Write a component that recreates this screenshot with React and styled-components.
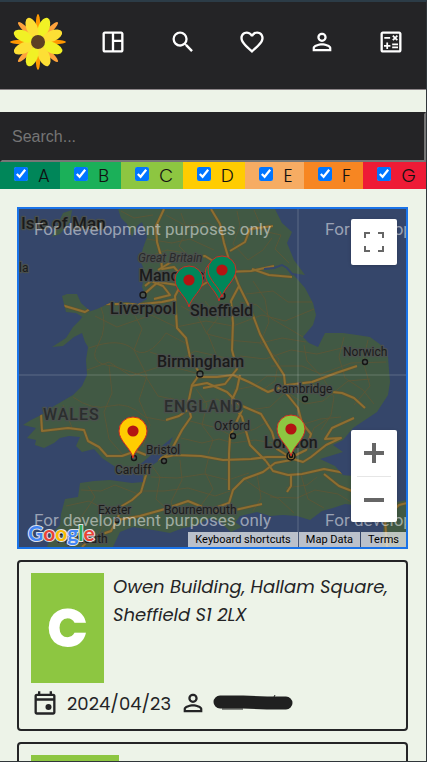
import React from "react";
import styled, { createGlobalStyle } from "styled-components";
import {
  MdOutlineSpaceDashboard,
  MdSearch,
  MdFavoriteBorder,
  MdPersonOutline,
  MdOutlineCalculate,
} from "react-icons/md";

const GlobalStyle = createGlobalStyle`
  *, *::before, *::after { box-sizing: border-box; }
  body {
    margin: 0;
    background: #edf3e8;
    color: #242426;
    font-family: Poppins, Inter, sans-serif;
    font-size: 18px;
    font-weight: 300;
  }
`;

const Shell = styled.div`
  height: 100vh;
  overflow-x: hidden;
  overflow-y: auto;
  scrollbar-width: none;
  border: solid #30363a;
  border-width: 0 1px 1px 0;
  border-top: 2px solid #2c3c47;
`;

const Header = styled.header`
  display: flex;
  align-items: center;
  gap: 31px;
  height: 88px;
  padding: 0 21px 8px 10px;
  background: #242426;
  border-bottom: 1px solid #8c8588;
`;

const HomeLink = styled.a`
  display: flex;
`;

const Nav = styled.nav`
  flex: 1;
  display: flex;
  justify-content: space-between;
`;

const NavLink = styled.a`
  display: flex;
  color: #fff;
  font-size: 28px;
`;

const SearchInput = styled.input`
  display: block;
  width: 100%;
  height: 50px;
  margin-top: 22px;
  padding: 0 10px;
  border: 2px solid #242426;
  border-right-color: #767676;
  border-bottom-color: #767676;
  background: #242426;
  color: #fff;
  font: 16px "Liberation Sans", Arial, sans-serif;
  &::placeholder { color: #757575; }
`;

const Filters = styled.div`
  display: flex;
`;

const Filter = styled.label`
  flex: ${(p) => p.$share} 1 0;
  display: flex;
  gap: 10px;
  height: 27px;
  padding-left: 14px;
  background: ${(p) => p.$color};
  color: #111;
  line-height: 28px;
`;

const Tick = styled.input`
  width: 14px;
  height: 14px;
  margin: 5px 0 0;
`;

const Content = styled.main`
  display: grid;
  gap: 11px;
  padding: 18px 18px 18px 17px;
`;

const MapFrame = styled.section`
  position: relative;
  height: 342px;
  overflow: hidden;
  border: 2px solid #1a73e8;
  background: #35466a;
`;

const MapDrawing = styled.svg`
  display: block;
  width: 100%;
  height: 100%;
  font-family: Roboto, sans-serif;
  font-weight: 400;
`;

const MapButtons = styled.div`
  position: absolute;
  right: 9px;
  ${(p) => (p.$bottom ? "bottom: 25px;" : "top: 10px;")}
  width: 46px;
  padding: 0 6px;
  border-radius: 2px;
  background: #fff;
  box-shadow: 0 1px 4px -1px rgba(0, 0, 0, 0.3);
`;

const MapButton = styled.button`
  display: flex;
  align-items: center;
  justify-content: center;
  width: 100%;
  height: 46px;
  padding: 0;
  border: 0;
  background: none;
  & + & { border-top: 1px solid #e6e6e6; }
`;

const Attribution = styled.div`
  position: absolute;
  right: 0;
  bottom: 0;
  display: flex;
  gap: 1px;
`;

const Credit = styled.a`
  height: 15px;
  padding: 0 7px;
  background: rgba(245, 245, 245, 0.7);
  color: #000;
  font: 11px/16px Roboto, sans-serif;
  text-decoration: none;
  white-space: nowrap;
`;

const Card = styled.article`
  display: grid;
  gap: 6px;
  padding: 11px 12px 12px;
  border: 2px solid #242426;
  border-radius: 4px;
`;

const CardTop = styled.div`
  display: flex;
  gap: 9px;
`;

const Rating = styled.div`
  flex: none;
  display: grid;
  place-items: center;
  width: ${(p) => (p.$wide ? 88 : 73)}px;
  height: 110px;
  background: #8dc641;
  color: #fff;
  font-size: 54px;
  font-weight: 800;
`;

const Address = styled.address`
  font-style: italic;
  font-weight: 400;
  line-height: 28px;
`;

const Meta = styled.div`
  display: flex;
  align-items: center;
  height: 28px;
  gap: 8px;
  font-weight: 400;
  svg { flex: none; }
`;

const Person = styled.span`
  display: flex;
  align-items: center;
  gap: 6px;
  font-size: 28px;
`;

const bands = [
  ["A", "#008659", 60],
  ["B", "#1bb059", 61],
  ["C", "#8dc641", 62],
  ["D", "#ffcc01", 63],
  ["E", "#f6ac63", 58],
  ["F", "#f78622", 59],
  ["G", "#ee1b36", 63],
];

const Petals = ({ turns, rx, ry, offset, colors }) =>
  turns.map((a, i) => (
    <ellipse
      key={a}
      cy={-offset}
      rx={rx}
      ry={ry}
      fill={colors[i % colors.length]}
      transform={`rotate(${a})`}
    />
  ));

const Flower = () => (
  <svg width="58" height="58" viewBox="-28 -29 58 58" aria-hidden="true">
    <Petals turns={[0, 90, 180, 270]} rx={2.2} ry={11} offset={17} colors={["#ff9800"]} />
    <Petals turns={[45, 135, 225, 315]} rx={2.6} ry={10} offset={18} colors={["#ffa33c"]} />
    <Petals
      turns={[22, 67, 112, 157, 202, 247, 292, 337]}
      rx={5.5}
      ry={10.5}
      offset={15.5}
      colors={["#f1f125", "#fddf35", "#f1f125", "#fddf35"]}
    />
    <circle r="7" fill="#5d4023" />
  </svg>
);

const Calendar = () => (
  <svg width="28" height="28" viewBox="0 0 24 24" fill="#242426" aria-hidden="true">
    <path
      fillRule="evenodd"
      d="M5 22q-.8 0-1.400-.6T3 20V6q0-.8.6-1.400T5 4h1V2h2v2h8V2h2v2h1q.8 0 1.400.6T21 6v14q0 .8-.6 1.400T19 22zm0-2h14V10H5zM5 8h14V6H5z"
    />
    <circle cx="15" cy="15.500" r="2.600" />
  </svg>
);

const land = [
  "M118 209L121 218 127 224 132 237 137 226 142 222 147 237 143 248 140 260 145 272 142 287 147 299 138 304 127 302 110 303 97 309 85 313 80 320 73 327 66 338 52 347 63 346 74 337 82 333 85 342 88 347 86 360 87 375 82 386 73 395 61 402 49 409 43 414 31 420 23 425 36 428 27 438 36 440 35 445 44 448 54 443 60 438 69 436 80 437 76 446 82 452 94 449 102 458 111 464 120 470 133 469 143 462 157 450 173 437 166 451 157 462 148 468 143 475 143 482 132 483 110 480 94 481 80 483 78 497 65 499 61 514 60 525 52 533 47 547H113L120 532 133 527 153 530 170 533 183 528 195 526 210 518 222 523 232 527 240 516 257 512 270 516 283 515 297 516 310 520 322 511 333 508 345 504 353 505 368 500 371 484 360 477 343 475 335 466 320 459 343 452 333 445 343 440 353 428 365 420 377 412 388 395 390 382 388 357 381 345 370 337 357 335 343 333 325 333 318 347 309 343 303 337 313 325 316 315 313 303 305 288 292 273 305 275 294 260 287 243 292 232 282 223 275 209Z",
  "M62 296L67 294 77 294 81 303 90 311 84 318 76 313 66 312Z",
  "M63 213L72 210 70 222 60 234 52 237 57 226Z",
  "M222 524L235 522 242 527 231 532Z",
  "M407 500L391 503 384 518 382 547H407Z",
];

const mainRoads = [
  "M164 209L156 226 157 242 161 256 162 269 174 267 184 279 175 296 177 328 186 338 190 357 200 374 192 385 188 404 191 417 182 430 173 447 164 457 148 463 146 475 141 492 132 500 122 506 117 520 111 531 91 538 82 547",
  "M58 304L85 312 98 304 118 304 143 304 162 302 176 299",
  "M143 295L158 282 177 285 190 293 204 284 225 272 251 271 274 266",
  "M145 286L151 281 163 286 170 295 154 299",
  "M158 270L178 258 205 256 218 264 234 270",
  "M211 209L220 224 224 243 230 263 239 286 231 301 233 323 232 350 237 369 225 384 203 388",
  "M239 286L251 310 260 334 273 358 284 375 286 393 298 408 302 423 311 434 306 450 292 457",
  "M230 251L245 242 250 229 273 226M252 269L269 275 292 277",
  "M41 414L42 431 68 428 84 430 88 441 99 447 107 456 122 456 136 451 146 455",
  "M166 420L179 416 189 409M149 461L174 455 201 456 223 460 251 459 267 457 289 457",
  "M191 386L207 383 227 392 240 405 261 414 272 432 277 449 288 456",
  "M240 375L237 389 231 402 242 417 250 445 266 461",
  "M196 377L217 377 233 375 249 382 268 392 287 385 312 382 336 373 357 366",
  "M212 509L229 503 233 490 244 479 263 472 275 463 291 460",
  "M266 461L273 471 288 475 302 474 324 469 350 474 362 479M291 475L291 486 287 492",
  "M324 474L339 486 352 491",
  "M287 457L303 462 311 457 326 445 341 438 325 439 332 428 354 418",
  "M312 385L322 391 342 393 354 398 365 408M242 410L230 436 229 453 229 490",
  "M117 520L140 516 165 509 188 501 212 511 235 510 262 504",
  "M387 547L385 519 399 505 407 503",
];

const minorRoads = [
  "M100 304Q109 326 98 345T113 366L146 377 158 396 191 403M89 348Q119 337 133 349T166 333L187 344",
  "M87 370L109 362 131 376 165 365 200 374M95 316L117 327 151 315 176 327 206 321 233 326 262 315 285 321 314 309",
  "M73 397Q92 411 110 406T145 417L166 421M63 405L73 430M109 365L112 393 104 412 109 439 123 455",
  "M131 308L142 329 134 350 147 376 139 400 150 425 143 447M150 352L178 361 195 351 230 359",
  "M228 340L261 343 282 338 306 342M240 356L265 359 291 350 317 354 342 348 373 354M271 366L302 366 321 374 351 363 386 362",
  "M181 213L187 230 179 246 191 258M166 215L186 226 208 223 220 231M147 239L172 243 190 239 214 250",
  "M237 211L240 226 233 244 248 260 263 250 272 238M254 210L263 231 281 235 275 249 289 263M243 229L267 230",
  "M246 294L273 291 288 302 312 302M240 302L257 305 272 319 288 328 303 337M205 301L218 318 207 332 216 354 205 371",
  "M181 306L197 315 207 334 231 340M253 281L265 299 269 322 260 343 279 359 275 381 261 391",
  "M196 389L207 404 202 425 213 440 208 454M170 398L192 405 217 399 235 409M190 421L217 428 232 436 255 429 270 420",
  "M234 390L254 386 267 376 282 377M249 410L270 407 286 392 305 404 323 401 348 381 370 379",
  "M304 345L307 361 323 378 334 397 331 415 321 430M344 337L339 357 345 378 363 390 374 404M368 340L363 361 370 386 354 405",
  "M180 460L182 480 171 502 176 517M209 456L205 472 213 489 199 508M151 477L177 478 204 474 228 480 249 473",
  "M143 491L164 491 188 488 215 496 233 490M81 490L101 491 115 485 138 494M66 506L89 501 108 511 124 505",
  "M69 529L82 516 95 497 88 486M95 543L102 527 115 519M244 479L261 491 279 499 294 513M257 474L261 498 253 511",
  "M286 488L307 485 317 477M270 497L297 498 315 490 338 494 351 502M301 475L308 499 324 508",
  "M121 211L134 218 153 215M148 257L167 250 186 253M150 463L160 477 156 499 168 510",
  "M181 438L202 443 219 439 233 443 255 440 279 444M301 425L320 419 341 417M307 445L314 428 329 418",
];

const towns = [
  [143, 295, 3], [200, 374, 3], [233, 436, 2.5], [305, 399, 2.5],
  [365, 362, 2.5], [134, 458, 2.5], [164, 461, 2.5], [222, 296, 3], [117, 520, 2.5],
];

const labels = [
  ["Isle of Man", 21, 229, 17, 500],
  ["la", 19, 272, 12, 400],
  ["Manchester", 139, 281, 16, 500],
  ["Liverpool", 110, 314, 16, 500],
  ["Sheffield", 190, 316, 16, 500],
  ["Birmingham", 157, 367, 16, 500],
  ["Norwich", 343, 356, 12, 400],
  ["Cambridge", 274, 393, 12, 400],
  ["Oxford", 214, 430, 12, 400],
  ["London", 264, 448, 16, 500],
  ["Bristol", 146, 454, 12, 400],
  ["Cardiff", 115, 474, 12, 400],
  ["Exeter", 98, 514, 12, 400],
  ["Bournemouth", 164, 514, 12, 400],
  ["Plymouth", 57, 543, 12, 400],
];

const pins = [
  [189, 307, "#008659"],
  [219, 301, "#008659"],
  [222, 297, "#008659"],
  [133, 458, "#ffcc01"],
  [291, 456, "#8dc641"],
];

const watermarks = [[34, 235], [325, 235], [34, 526], [325, 526]];

const MapArt = () => (
  <MapDrawing viewBox="19 209 387 338" preserveAspectRatio="xMidYMid slice" role="img" aria-label="Map">
    <clipPath id="land">
      {land.map((d) => <path key={d} d={d} />)}
    </clipPath>
    <g fill="#415944">
      {land.map((d) => <path key={d} d={d} />)}
    </g>
    <g fill="none" strokeLinejoin="round" clipPath="url(#land)">
      {minorRoads.map((d) => <path key={d} d={d} stroke="#5f5636" opacity=".8" />)}
      {mainRoads.map((d) => <path key={d} d={d} stroke="#5e532f" strokeWidth="3" />)}
      {mainRoads.map((d) => <path key={d} d={d} stroke="#8d6e31" strokeWidth="2" />)}
    </g>
    <path d="M264 269L274 268 282 265 287 268 293 275" fill="none" stroke="#35466a" strokeWidth="2" />
    <g fill="#4b5450" stroke="#151515" strokeWidth="1.400">
      {towns.map(([x, y, r]) => <circle key={x} cx={x} cy={y} r={r} />)}
    </g>
    <g fill="none" stroke="#111" strokeWidth="1.500">
      <circle cx="291" cy="456" r="4" />
      <circle cx="291" cy="456" r="1.500" />
    </g>
    <g fill="#1b1b1b" stroke="#4a504d" strokeWidth="2.500" strokeLinejoin="round" paintOrder="stroke">
      {labels.map(([name, x, y, size, weight]) => (
        <text key={name} x={x} y={y} fontSize={size} fontWeight={weight}>{name}</text>
      ))}
      <text x="138" y="262" fontSize="12" fontStyle="italic" fill="#2a2a2a">Great Britain</text>
      <g fill="#2b2e2d" fontSize="16" fontWeight="500" letterSpacing="1">
        <text x="43" y="420">WALES</text>
        <text x="164" y="412">ENGLAND</text>
      </g>
    </g>
    <path d="M298 209V547M19 375H406" stroke="#fff" strokeOpacity=".2" />
    <g fill="#fff" fillOpacity=".5" fontSize="17">
      {watermarks.map(([x, y]) => (
        <text key={`${x} ${y}`} x={x} y={y}>For development purposes only</text>
      ))}
    </g>
    {pins.map(([x, y, color]) => (
      <g key={x} transform={`translate(${x} ${y})`}>
        <path
          d="M0 0C-2-10-14-17-14-27A14 14 0 0 1 14-27C14-17 2-10 0 0Z"
          fill={color}
          stroke="#d22a22"
        />
        <circle cy="-27" r="5.600" fill="#b31412" />
      </g>
    ))}
    <text
      x="28"
      y="541"
      fontFamily="Lato, sans-serif"
      fontSize="21"
      fontWeight="700"
      stroke="#dfe3ea"
      strokeWidth="2"
      paintOrder="stroke"
    >
      <tspan fill="#4285f4">G</tspan>
      <tspan fill="#ea4335">o</tspan>
      <tspan fill="#fbbc04">o</tspan>
      <tspan fill="#4285f4">g</tspan>
      <tspan fill="#34a853">l</tspan>
      <tspan fill="#ea4335">e</tspan>
    </text>
  </MapDrawing>
);

const ControlIcon = ({ d }) => (
  <svg width="20" height="20" viewBox="0 0 20 20" fill="#666" aria-hidden="true">
    <path d={d} />
  </svg>
);

export default function App() {
  return (
    <Shell>
      <GlobalStyle />
      <Header>
        <HomeLink href="#" aria-label="Home"><Flower /></HomeLink>
        <Nav>
          <NavLink href="#dashboard" aria-label="Dashboard"><MdOutlineSpaceDashboard /></NavLink>
          <NavLink href="#search" aria-label="Search"><MdSearch /></NavLink>
          <NavLink href="#favourites" aria-label="Favourites"><MdFavoriteBorder /></NavLink>
          <NavLink href="#account" aria-label="Account"><MdPersonOutline /></NavLink>
          <NavLink href="#calculator" aria-label="Calculator"><MdOutlineCalculate /></NavLink>
        </Nav>
      </Header>
      <SearchInput type="search" placeholder="Search..." aria-label="Search" />
      <Filters>
        {bands.map(([letter, color, share]) => (
          <Filter key={letter} $color={color} $share={share}>
            <Tick type="checkbox" defaultChecked />
            {letter}
          </Filter>
        ))}
      </Filters>
      <Content>
        <MapFrame>
          <MapArt />
          <MapButtons>
            <MapButton aria-label="Toggle fullscreen view">
              <ControlIcon d="M0 0H6V2H2V6H0ZM14 0H20V6H18V2H14ZM0 14H2V18H6V20H0ZM18 14H20V20H14V18H18Z" />
            </MapButton>
          </MapButtons>
          <MapButtons $bottom>
            <MapButton aria-label="Zoom in">
              <ControlIcon d="M8 0H12V8H20V12H12V20H8V12H0V8H8Z" />
            </MapButton>
            <MapButton aria-label="Zoom out">
              <ControlIcon d="M0 8H20V12H0Z" />
            </MapButton>
          </MapButtons>
          <Attribution>
            <Credit href="#shortcuts">Keyboard shortcuts</Credit>
            <Credit href="#data">Map Data</Credit>
            <Credit href="#terms">Terms</Credit>
          </Attribution>
        </MapFrame>
        <Card>
          <CardTop>
            <Rating>C</Rating>
            <Address>Owen Building, Hallam Square, Sheffield S1 2LX</Address>
          </CardTop>
          <Meta>
            <Calendar />
            <time dateTime="2024-04-23">2024/04/23</time>
            <Person>
              <MdPersonOutline />
              <svg width="80" height="18" viewBox="0 0 80 18" aria-hidden="true">
                <path d="M7 8L30 8 54 9 73 9" fill="none" stroke="#202020" strokeWidth="13" strokeLinecap="round" />
                <path d="M9 15H30M61 3L62 1" stroke="#202020" strokeWidth="1" />
              </svg>
            </Person>
          </Meta>
        </Card>
        <Card>
          <CardTop>
            <Rating $wide>C</Rating>
          </CardTop>
        </Card>
      </Content>
    </Shell>
  );
}
